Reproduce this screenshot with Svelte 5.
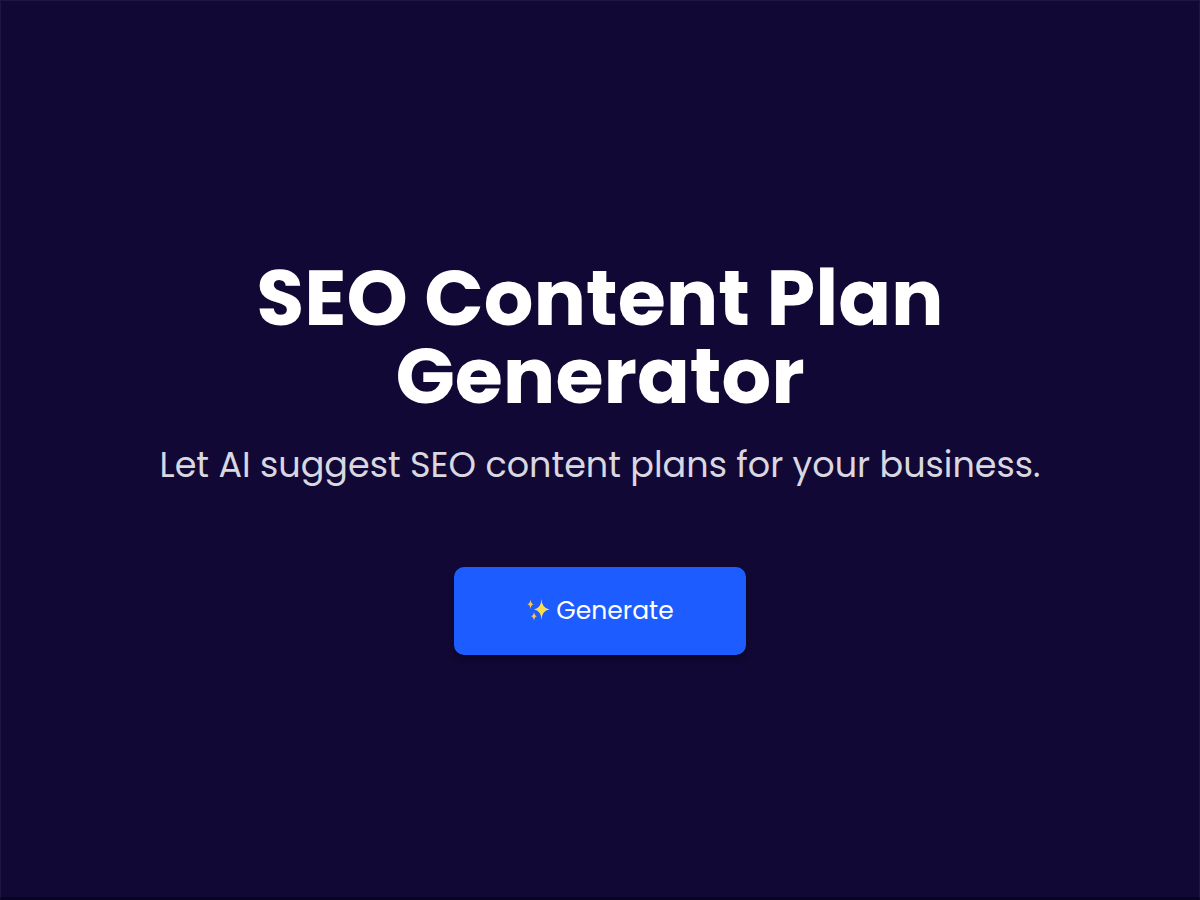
<script lang="ts">
    let {
        title = 'SEO Content Plan Generator',
        subtitle = 'Let AI suggest SEO content plans for your business.',
        ongenerate = () => {}
    } = $props();
</script>

<main class="hero">
    <h1>{title}</h1>
    <p class="subtitle">{subtitle}</p>
    <button type="button" class="generate" onclick={ongenerate}>
        <svg class="sparkles" viewBox="0 0 24 24" aria-hidden="true">
            <path fill="#ffdc4a" d="M15.5 0 Q15.9 9.3 23.5 10.5 Q15.9 11.7 15.5 21 Q15.1 11.7 8 10.5 Q15.1 9.3 15.5 0Z" />
            <path fill="#f4c84e" d="M4.5 0.5 Q4.9 4.5 7.6 5.2 Q4.9 5.9 4.5 10 Q4.1 5.9 1.4 5.2 Q4.1 4.5 4.5 0.5Z" />
            <path fill="#f4c84e" d="M8 13 Q8.4 16.5 10.9 17.2 Q8.4 17.9 8 21.8 Q7.6 17.9 5.1 17.2 Q7.6 16.5 8 13Z" />
        </svg>
        <span>Generate</span>
    </button>
</main>

<style>
    :global(body) {
        margin: 0;
        background: #120836;
    }
    .hero {
        box-sizing: border-box;
        min-height: 100vh;
        padding: 16px 48px 0;
        display: flex;
        flex-direction: column;
        align-items: center;
        justify-content: center;
        border: 1px solid #1e1540;
        border-bottom: 3px solid #090420;
        background: #120836;
        color: #fff;
        font-family: Poppins, Inter, sans-serif;
        text-align: center;
    }
    h1 {
        max-width: 800px;
        margin: 0;
        font-size: 78px;
        font-weight: 700;
        line-height: 78px;
    }
    .subtitle {
        margin: 22px 0 74px;
        color: #d9d7e0;
        font-size: 35px;
        line-height: 56px;
    }
    .generate {
        display: flex;
        align-items: center;
        justify-content: center;
        gap: 6px;
        padding: 26px 72px;
        border: 0;
        border-radius: 10px;
        background: #1d5cff;
        box-shadow: 0 3px 6px rgba(0, 0, 0, 0.4);
        color: #fff;
        font-family: inherit;
        font-size: 25px;
        line-height: 36px;
        cursor: pointer;
    }
    .sparkles {
        width: 24px;
        height: 24px;
    }
</style>
